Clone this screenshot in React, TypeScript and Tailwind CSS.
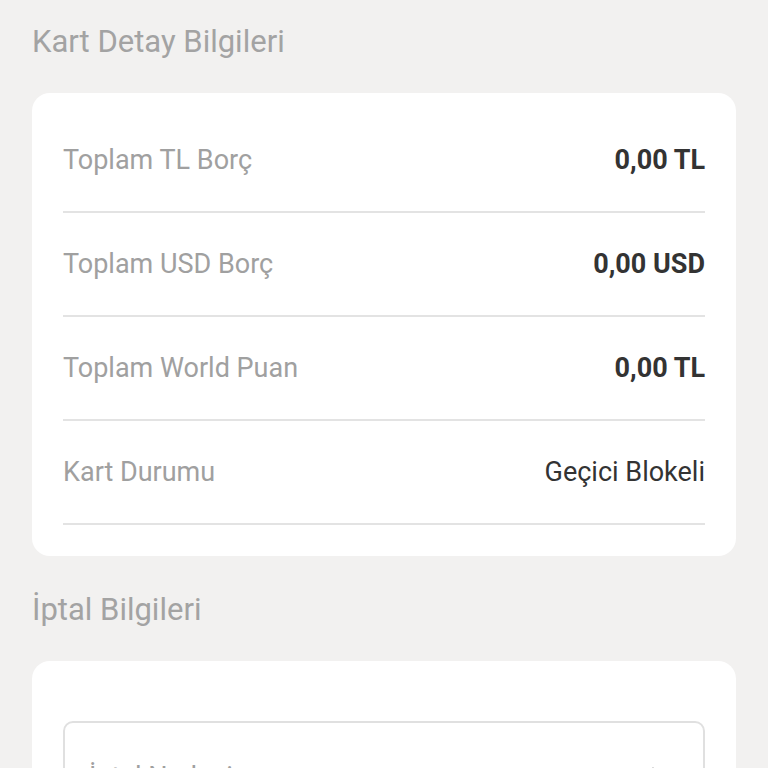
import { ChevronRight } from "lucide-react";

type Row = {
  label: string;
  value: string;
  strong?: boolean;
};

const rows: Row[] = [
  { label: "Toplam TL Borç", value: "0,00 TL", strong: true },
  { label: "Toplam USD Borç", value: "0,00 USD", strong: true },
  { label: "Toplam World Puan", value: "0,00 TL", strong: true },
  { label: "Kart Durumu", value: "Geçici Blokeli" },
];

function SectionTitle({ children }: { children: string }) {
  return (
    <h2 className="h-[36px] text-[31px] leading-[36px] font-normal text-[#a3a3a3]">
      {children}
    </h2>
  );
}

export default function App() {
  return (
    <div
      className="min-h-screen overflow-hidden bg-[#f2f1f0] px-8 pt-[24px]"
      style={{ fontFamily: "Roboto, 'Noto Sans', sans-serif" }}
    >
      <SectionTitle>Kart Detay Bilgileri</SectionTitle>

      <section className="mt-[33px] rounded-[18px] bg-white px-[31px] pt-[16px] pb-[31px]">
        {rows.map((row) => (
          <div
            key={row.label}
            className="flex h-[104px] items-center justify-between border-b-2 border-[#e3e3e3]"
          >
            <span className="text-[27px] text-[#a0a0a0]">{row.label}</span>
            <span
              className={
                row.strong
                  ? "text-[27px] font-bold text-[#333333]"
                  : "text-[27px] font-normal text-[#333333]"
              }
            >
              {row.value}
            </span>
          </div>
        ))}
      </section>

      <div className="mt-[36px]">
        <SectionTitle>İptal Bilgileri</SectionTitle>
      </div>

      <section className="mt-[33px] rounded-[18px] bg-white px-[31px] pt-[60px] pb-[31px]">
        <div className="flex h-[112px] items-center justify-between rounded-[10px] border-2 border-[#e0e0e0] pl-[24px] pr-[30px]">
          <span className="text-[27px] text-[#a0a0a0]">İptal Nedeni</span>
          <ChevronRight className="size-[32px] text-[#7a7a7a]" strokeWidth={2.2} aria-hidden="true" />
        </div>
      </section>
    </div>
  );
}
